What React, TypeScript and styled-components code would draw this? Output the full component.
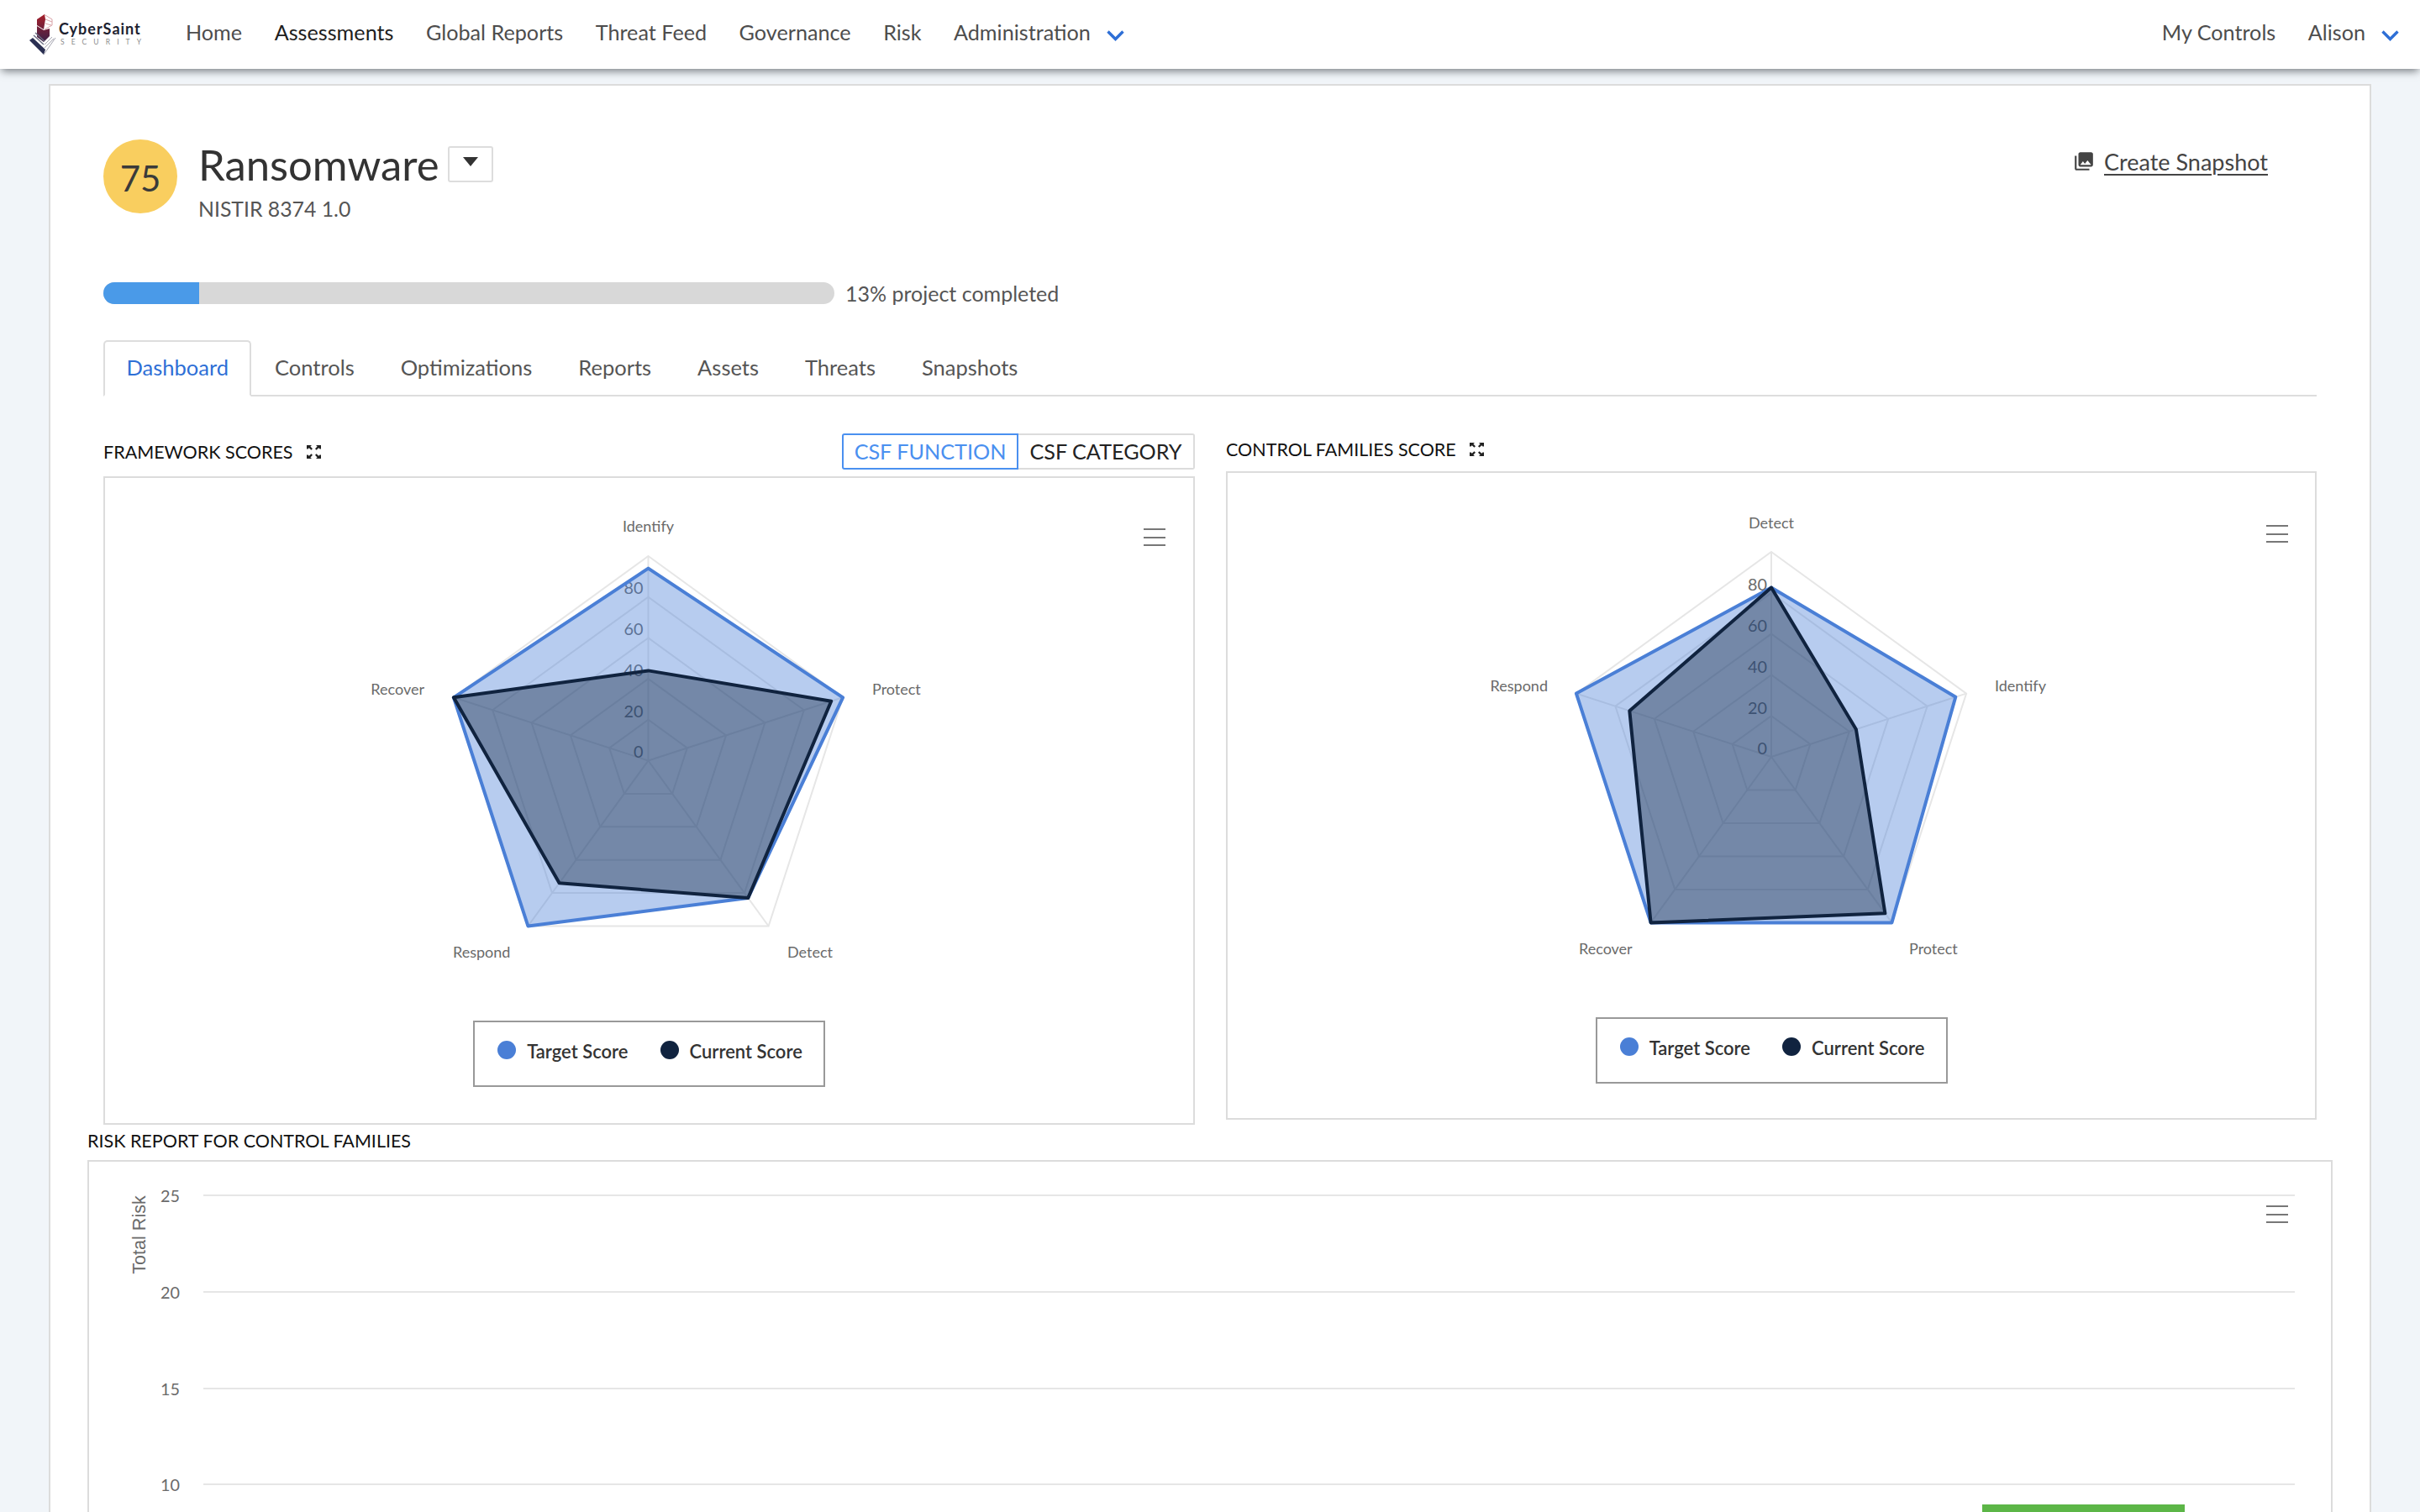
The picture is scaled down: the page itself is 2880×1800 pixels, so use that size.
import React from "react";
import styled, { createGlobalStyle } from "styled-components";
import { MdPhotoLibrary } from "react-icons/md";

const GlobalStyle = createGlobalStyle`
  html, body { margin: 0; padding: 0; background: #f1f5f9; }
  body { font-family: Lato, "Open Sans", sans-serif; color: #444; }
  * { box-sizing: border-box; }
`;

const Page = styled.div`
  height: 1800px;
  overflow: hidden;
  position: relative;
`;

const Header = styled.header`
  position: relative;
  z-index: 2;
  height: 82px;
  background: #fff;
  display: flex;
  align-items: center;
  padding: 0 25px 6px 35px;
  box-shadow: 0 5px 9px -2px rgba(30, 35, 40, 0.55);
`;

const Logo = styled.div`
  display: flex;
  align-items: center;
  width: 186px;
  flex: none;
  margin-top: 6px;
`;

const LogoWords = styled.div`
  margin-left: 3px;
  display: flex;
  flex-direction: column;
`;

const LogoName = styled.span`
  font-size: 18px;
  line-height: 19px;
  font-weight: 700;
  letter-spacing: 1px;
  color: #1d2230;
`;

const LogoSub = styled.span`
  font-size: 8.5px;
  line-height: 13px;
  letter-spacing: 8.1px;
  margin-left: 2px;
  color: #8d8d8d;
  white-space: nowrap;
`;

const Nav = styled.nav<{ $fixed?: boolean }>`
  display: flex;
  align-items: center;
  gap: 38.5px;
  flex: ${(p) => (p.$fixed ? "none" : "1")};
`;

const NavLink = styled.a<{ $active?: boolean }>`
  font-size: 25.2px;
  line-height: 32px;
  color: ${(p) => (p.$active ? "#1e1e1e" : "#4d4d4d")};
  white-space: nowrap;
`;

const NavMenu = styled.span`
  display: inline-flex;
  align-items: center;
  gap: 19px;
`;

const Chevron = styled.svg`
  width: 21px;
  height: 14px;
  margin-top: 8px;
  color: #2e6fd6;
`;

const Card = styled.main`
  margin: 18px 58px 0;
  background: #fff;
  border: 2px solid #dcdcdc;
  padding: 64px 63px 0;
  height: 1800px;
`;

const Head = styled.section`
  display: flex;
  justify-content: space-between;
  height: 88px;
`;

const HeadLeft = styled.div`
  display: flex;
  gap: 25px;
`;

const Score = styled.div`
  width: 88px;
  height: 88px;
  border-radius: 50%;
  background: #f9ce5f;
  display: flex;
  align-items: center;
  justify-content: center;
  font-size: 42px;
  color: #3a3a3a;
  padding-top: 4px;
`;

const TitleBlock = styled.div`
  display: flex;
  flex-direction: column;
`;

const TitleRow = styled.div`
  display: flex;
  align-items: center;
  gap: 10px;
  height: 60px;
`;

const Title = styled.h1`
  margin: 0;
  font-size: 50.8px;
  font-weight: 400;
  color: #333;
  line-height: 60px;
`;

const DropButton = styled.div`
  width: 54px;
  height: 43px;
  border: 2px solid #ddd;
  border-radius: 3px;
  display: flex;
  align-items: center;
  justify-content: center;
  padding-bottom: 6px;
  margin-bottom: 2px;
`;

const Caret = styled.div`
  width: 0;
  height: 0;
  border-left: 9.5px solid transparent;
  border-right: 9.5px solid transparent;
  border-top: 11px solid #333;
`;

const SubTitle = styled.div`
  font-size: 24.8px;
  line-height: 30px;
  color: #555;
  margin-top: 8px;
`;

const SnapshotLink = styled.a`
  display: flex;
  align-items: center;
  gap: 11px;
  height: 30px;
  margin: 11px 58px 0 0;
  font-size: 27px;
  color: #444;
`;

const SnapshotText = styled.span`
  text-decoration: underline;
  text-underline-offset: 4px;
  text-decoration-thickness: 2px;
`;

const ProgressRow = styled.section`
  display: flex;
  align-items: center;
  gap: 13px;
  margin-top: 79px;
`;

const Track = styled.div`
  width: 870px;
  height: 26px;
  background: #d8d8d8;
  border-radius: 13px;
  overflow: hidden;
`;

const Fill = styled.div`
  height: 100%;
  background: #4a9ae8;
`;

const ProgressLabel = styled.span`
  font-size: 25px;
  line-height: 32px;
  color: #555;
`;

const Tabs = styled.div`
  display: flex;
  margin-top: 40px;
  height: 67px;
  border-bottom: 2px solid #ddd;
`;

const Tab = styled.div<{ $active?: boolean }>`
  height: ${(p) => (p.$active ? "67px" : "65px")};
  padding: 0 25.5px;
  font-size: 25.5px;
  line-height: 60px;
  color: ${(p) => (p.$active ? "#2e6fd6" : "#555")};
  background: ${(p) => (p.$active ? "#fff" : "transparent")};
  border: 2px solid ${(p) => (p.$active ? "#ddd" : "transparent")};
  border-bottom: ${(p) => (p.$active ? "2px solid #fff" : "none")};
  border-radius: 5px 5px 0 0;
`;

const Columns = styled.section`
  display: grid;
  grid-template-columns: 1299px 1298px;
  column-gap: 37px;
  margin-top: 44px;
`;

const Column = styled.div`
  display: flex;
  flex-direction: column;
`;

const ColumnHead = styled.div<{ $height: number; $gap: number }>`
  display: flex;
  align-items: center;
  justify-content: space-between;
  height: ${(p) => p.$height}px;
  margin-bottom: ${(p) => p.$gap}px;
`;

const SectionTitle = styled.h2`
  margin: 0;
  display: flex;
  align-items: center;
  gap: 16px;
  font-size: 21.5px;
  font-weight: 400;
  line-height: 30px;
  color: #111;
  white-space: nowrap;
`;

const Toggle = styled.div`
  display: flex;
  height: 43px;
`;

const ToggleItem = styled.div<{ $active?: boolean }>`
  display: flex;
  align-items: center;
  justify-content: center;
  width: 210px;
  padding-bottom: 2px;
  font-size: 25.2px;
  white-space: nowrap;
  color: ${(p) => (p.$active ? "#4a90f0" : "#222")};
  border: 2px solid ${(p) => (p.$active ? "#4a90f0" : "#dcdcdc")};
  border-left-width: ${(p) => (p.$active ? "2px" : "0")};
  border-radius: ${(p) => (p.$active ? "3px 0 0 3px" : "0 3px 3px 0")};
`;

const ChartPanel = styled.div`
  position: relative;
  border: 2px solid #dcdcdc;
  background: #fff;
  height: 772px;
  display: flex;
  flex-direction: column;
  align-items: center;
`;

const ChartSvg = styled.svg`
  display: block;
  flex: none;
  width: 100%;
  font-family: Lato, sans-serif;
`;

const Legend = styled.div`
  width: 419px;
  height: 79px;
  border: 2px solid #999;
  display: flex;
  align-items: center;
  justify-content: center;
  gap: 38px;
  padding: 0 0 6px 2px;
`;

const LegendItem = styled.div`
  display: flex;
  align-items: center;
  gap: 13px;
  font-size: 22px;
  font-weight: 600;
  color: #333;
  white-space: nowrap;
`;

const Dot = styled.i<{ $color: string }>`
  display: block;
  width: 22px;
  height: 22px;
  margin-top: -4px;
  border-radius: 50%;
  background: ${(p) => p.$color};
`;

const Burger = styled.div<{ $top: number; $right: number }>`
  position: absolute;
  top: ${(p) => p.$top}px;
  right: ${(p) => p.$right}px;
  width: 26px;
  height: 21px;
  border-top: 2px solid #777;
  border-bottom: 2px solid #777;
  &::after {
    content: "";
    display: block;
    margin-top: 7.5px;
    height: 2px;
    background: #777;
  }
`;

const RiskTitle = styled(SectionTitle)`
  margin: 4px 0 8px -19px;
`;

const RiskPanel = styled.div`
  position: relative;
  margin: 0 -19px 0 -19px;
  height: 600px;
  border: 2px solid #dcdcdc;
  background: #fff;
`;

type Pt = { x: number; y: number; text: string; anchor?: "start" | "middle" | "end" };

const angles = [0, 1, 2, 3, 4].map((i) => (i * 2 * Math.PI) / 5);

const points = (cx: number, cy: number, r: number, vals: number[]) =>
  vals
    .map((v, i) => {
      const d = (r * v) / 100;
      return `${(cx + d * Math.sin(angles[i])).toFixed(1)},${(cy - d * Math.cos(angles[i])).toFixed(1)}`;
    })
    .join(" ");

function Radar(props: {
  ox: number;
  oy: number;
  vw: number;
  vh: number;
  cx: number;
  cy: number;
  r: number;
  target: number[];
  current: number[];
  labels: Pt[];
  scaleX: number;
  scaleY: number[];
}) {
  const { ox, oy, vw, vh, cx, cy, r, target, current, labels, scaleX, scaleY } = props;
  const ring = [20, 40, 60, 80, 100];
  return (
    <ChartSvg viewBox={`${ox} ${oy} ${vw} ${vh}`} height={vh}>
      {ring.map((v) => (
        <polygon key={v} points={points(cx, cy, r, [v, v, v, v, v])} fill="none" stroke="#e6e6e6" strokeWidth={2} />
      ))}
      {angles.map((a, i) => (
        <line key={i} x1={cx} y1={cy} x2={cx + r * Math.sin(a)} y2={cy - r * Math.cos(a)} stroke="#e6e6e6" strokeWidth={2} />
      ))}
      {["80", "60", "40", "20", "0"].map((t, i) => (
        <text key={t} x={scaleX} y={scaleY[i]} textAnchor="end" dominantBaseline="central" fontSize={19.8} fill="#6a6a6a">
          {t}
        </text>
      ))}
      <polygon points={points(cx, cy, r, target)} fill="rgba(74,127,214,.4)" stroke="#4a7fd6" strokeWidth={4} strokeLinejoin="round" />
      <polygon points={points(cx, cy, r, current)} fill="rgba(16,35,63,.4)" stroke="#10233f" strokeWidth={4} strokeLinejoin="round" />
      {labels.map((l) => (
        <text key={l.text} x={l.x} y={l.y} textAnchor={l.anchor ?? "start"} dominantBaseline="central" fontSize={18} fill="#6a6a6a">
          {l.text}
        </text>
      ))}
    </ChartSvg>
  );
}

const ExpandIcon = () => (
  <svg width="17" height="16" viewBox="0 0 17 16" fill="#222" style={{ flex: "none" }}>
    <path d="M0 0h6L4.4 1.6 7 4.2 5.4 5.8 2.8 3.2 1.4 4.6H0zM17 0h-6l1.6 1.6L10 4.2l1.6 1.6 2.6-2.6 1.4 1.4H17zM0 16h6l-1.6-1.6L7 11.8l-1.6-1.6-2.6 2.6-1.4-1.4H0zM17 16h-6l1.6-1.6-2.6-2.6 1.6-1.6 2.6 2.6 1.4-1.4H17z" />
  </svg>
);

const Down = () => (
  <Chevron viewBox="0 0 21 14" fill="none" stroke="currentColor" strokeWidth={3.4}>
    <path d="M1.5 2.5 10.5 11.5 19.5 2.5" />
  </Chevron>
);

const LogoMark = () => (
  <svg width="32" height="49" viewBox="0 0 32 49" style={{ flex: "none" }}>
    <defs>
      <linearGradient id="tower" x1="0" y1="0" x2="0" y2="1">
        <stop offset="0" stopColor="#a81f2a" />
        <stop offset="1" stopColor="#3a2148" />
      </linearGradient>
    </defs>
    <path d="M9 6 18 0 19 6 17 18 9 13zM9 14 17 19 24 17V26L17 33 9 27z" fill="url(#tower)" />
    <path d="M18 .5 27 6V13L18 18M19 6 27 9M19 11 26 13" fill="none" stroke="#d9a3a8" strokeWidth={1} />
    <path d="M0 31 4 28 19 42 17 48z" fill="#2a2f52" />
    <path d="M5 25 17 36M7 22 18 32" fill="none" stroke="#6a6c82" strokeWidth={1.3} />
    <path d="M17 48 31 28M18 40 29 29M18 36 27 27" fill="none" stroke="#a5a5b0" strokeWidth={1} />
  </svg>
);

const MenuItems = ["Home", "Assessments", "Global Reports", "Threat Feed", "Governance", "Risk"];
const TabItems = ["Dashboard", "Controls", "Optimizations", "Reports", "Assets", "Threats", "Snapshots"];

const ScoreLegend = () => (
  <Legend>
    <LegendItem>
      <Dot $color="#4a7fd6" />
      Target Score
    </LegendItem>
    <LegendItem>
      <Dot $color="#10233f" />
      Current Score
    </LegendItem>
  </Legend>
);

export default function App() {
  return (
    <Page>
      <GlobalStyle />
      <Header>
        <Logo>
          <LogoMark />
          <LogoWords>
            <LogoName>CyberSaint</LogoName>
            <LogoSub>SECURITY</LogoSub>
          </LogoWords>
        </Logo>
        <Nav>
          {MenuItems.map((m) => (
            <NavLink key={m} $active={m === "Assessments"}>
              {m}
            </NavLink>
          ))}
          <NavMenu>
            <NavLink>Administration</NavLink>
            <Down />
          </NavMenu>
        </Nav>
        <Nav as="div" $fixed>
          <NavLink>My Controls</NavLink>
          <NavMenu>
            <NavLink>Alison</NavLink>
            <Down />
          </NavMenu>
        </Nav>
      </Header>
      <Card>
        <Head>
          <HeadLeft>
            <Score>75</Score>
            <TitleBlock>
              <TitleRow>
                <Title>Ransomware</Title>
                <DropButton>
                  <Caret />
                </DropButton>
              </TitleRow>
              <SubTitle>NISTIR 8374 1.0</SubTitle>
            </TitleBlock>
          </HeadLeft>
          <SnapshotLink>
            <MdPhotoLibrary size={26} color="#444" />
            <SnapshotText>Create Snapshot</SnapshotText>
          </SnapshotLink>
        </Head>
        <ProgressRow>
          <Track>
            <Fill style={{ width: `${(114 / 870) * 100}%` }} />
          </Track>
          <ProgressLabel>13% project completed</ProgressLabel>
        </ProgressRow>
        <Tabs>
          {TabItems.map((t) => (
            <Tab key={t} $active={t === "Dashboard"}>
              {t}
            </Tab>
          ))}
        </Tabs>
        <Columns>
          <Column>
            <ColumnHead $height={43} $gap={8}>
              <SectionTitle>
                FRAMEWORK SCORES
                <ExpandIcon />
              </SectionTitle>
              <Toggle>
                <ToggleItem $active>CSF FUNCTION</ToggleItem>
                <ToggleItem>CSF CATEGORY</ToggleItem>
              </Toggle>
            </ColumnHead>
            <ChartPanel>
              <Radar
                ox={125}
                oy={569}
                vw={1295}
                vh={646}
                cx={771.5}
                cy={905.5}
                r={243.5}
                target={[94, 100, 83, 100, 100]}
                current={[44, 94, 83, 74, 100]}
                scaleX={765.5}
                scaleY={[699, 748, 797, 846, 894]}
                labels={[
                  { x: 771.5, y: 626, text: "Identify", anchor: "middle" },
                  { x: 1038, y: 820, text: "Protect" },
                  { x: 937, y: 1133, text: "Detect" },
                  { x: 539, y: 1133, text: "Respond" },
                  { x: 505, y: 820, text: "Recover", anchor: "end" },
                ]}
              />
              <ScoreLegend />
              <Burger $top={60} $right={33} />
            </ChartPanel>
          </Column>
          <Column>
            <ColumnHead $height={38} $gap={7}>
              <SectionTitle>
                CONTROL FAMILIES SCORE
                <ExpandIcon />
              </SectionTitle>
            </ColumnHead>
            <ChartPanel>
              <Radar
                ox={1461}
                oy={563}
                vw={1294}
                vh={648}
                cx={2108}
                cy={901}
                r={244}
                target={[82.6, 94.5, 100, 100, 100]}
                current={[82.6, 43.5, 94.4, 100, 72.7]}
                scaleX={2103}
                scaleY={[695, 744, 793, 842, 890]}
                labels={[
                  { x: 2108, y: 622, text: "Detect", anchor: "middle" },
                  { x: 2374, y: 816, text: "Identify" },
                  { x: 2272, y: 1129, text: "Protect" },
                  { x: 1879, y: 1129, text: "Recover" },
                  { x: 1842, y: 816, text: "Respond", anchor: "end" },
                ]}
              />
              <ScoreLegend />
              <Burger $top={62} $right={32} />
            </ChartPanel>
          </Column>
        </Columns>
        <RiskTitle as="h2">RISK REPORT FOR CONTROL FAMILIES</RiskTitle>
        <RiskPanel>
          <ChartSvg viewBox="106 1383 2668 596" height={596}>
            {[
              { y: 1423, t: "25" },
              { y: 1538, t: "20" },
              { y: 1653, t: "15" },
              { y: 1767, t: "10" },
            ].map((g) => (
              <g key={g.t}>
                <line x1={242} x2={2731} y1={g.y} y2={g.y} stroke="#e6e6e6" strokeWidth={2} />
                <text x={214} y={g.y} textAnchor="end" dominantBaseline="central" fontSize={19.8} fill="#6a6a6a">
                  {g.t}
                </text>
              </g>
            ))}
            <text
              transform="translate(165 1470) rotate(-90)"
              textAnchor="middle"
              dominantBaseline="central"
              fontSize={21.6}
              fill="#6a6a6a"
              fontFamily="'Liberation Sans', sans-serif"
            >
              Total Risk
            </text>
            <rect x={2359} y={1791} width={241} height={100} fill="#5cb647" />
          </ChartSvg>
          <Burger $top={52} $right={51} />
        </RiskPanel>
      </Card>
    </Page>
  );
}
